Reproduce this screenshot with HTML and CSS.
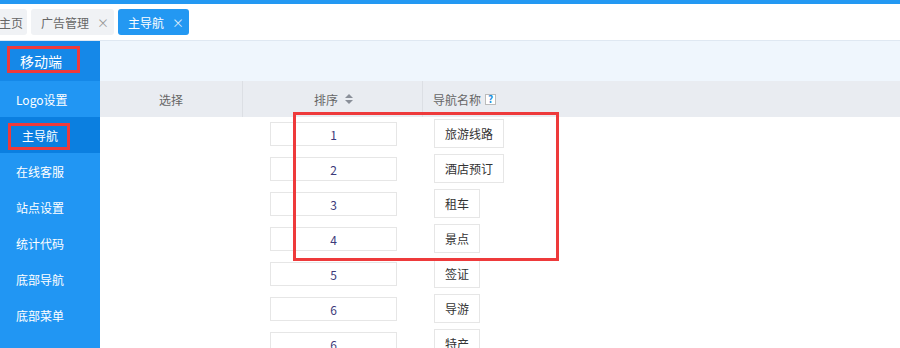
FILE: index.html
```html
<!DOCTYPE html>
<html>
<head>
<meta charset="utf-8">
<link rel="stylesheet" href="styles.css">
</head>
<body>
<div class="topline"></div>
<div class="tabbar">
  <div class="tab tab-cut">主页</div>
  <div class="tab">广告管理<span class="x">×</span></div>
  <div class="tab active">主导航<span class="x">×</span></div>
</div>
<div class="main">
  <aside class="side">
    <div class="side-head"><span class="side-title">移动端</span><span class="mark mark-head"></span></div>
    <div class="item">Logo设置</div>
    <div class="item on">主导航<span class="mark mark-item"></span></div>
    <div class="item">在线客服</div>
    <div class="item">站点设置</div>
    <div class="item">统计代码</div>
    <div class="item">底部导航</div>
    <div class="item">底部菜单</div>
  </aside>
  <section class="content">
    <div class="strip"></div>
    <div class="table">
      <div class="thead">
        <div class="c1">选择</div>
        <div class="c2">排序 <svg class="sort" width="8" height="10" viewBox="0 0 8 10"><path d="M4 0L8 4H0z M0 6H8L4 10z" fill="#8a8f99"/></svg></div>
        <div class="c3">导航名称 <span class="help">?</span></div>
      </div>
      <div class="row"><div class="c1"></div><div class="c2"><span class="inp">1</span></div><div class="c3"><span class="btn">旅游线路</span></div></div>
      <div class="row"><div class="c1"></div><div class="c2"><span class="inp">2</span></div><div class="c3"><span class="btn">酒店预订</span></div></div>
      <div class="row"><div class="c1"></div><div class="c2"><span class="inp">3</span></div><div class="c3"><span class="btn">租车</span></div></div>
      <div class="row"><div class="c1"></div><div class="c2"><span class="inp">4</span></div><div class="c3"><span class="btn">景点</span></div></div>
      <div class="row"><div class="c1"></div><div class="c2"><span class="inp">5</span></div><div class="c3"><span class="btn">签证</span></div></div>
      <div class="row"><div class="c1"></div><div class="c2"><span class="inp">6</span></div><div class="c3"><span class="btn">导游</span></div></div>
      <div class="row"><div class="c1"></div><div class="c2"><span class="inp">6</span></div><div class="c3"><span class="btn">特产</span></div></div>
      <div class="mark mark-table"></div>
    </div>
  </section>
</div>
</body>
</html>
```

FILE: styles.css
```css
* { box-sizing: border-box; }
html, body { margin: 0; padding: 0; }
body {
  width: 900px; height: 348px; overflow: hidden;
  font-family: "Microsoft YaHei", "Noto Sans CJK SC", "Noto Sans", sans-serif;
  font-size: 12px; color: #333; background: #fff;
}
.topline { height: 4px; background: #2398f2; }
.tabbar {
  height: 37px; display: flex; align-items: flex-start; gap: 4px;
  padding-top: 5px; margin-left: -20px;
  border-bottom: 1px solid #dfe8f2; background: #fff;
}
.tab {
  height: 26px; padding: 0 10px 0 10px; white-space: nowrap; flex-shrink: 0;
  background: #f0f2f5; color: #666; border-radius: 3px;
  display: flex; align-items: center; font-size: 12px;
}
.tab-cut { width: 47px; padding-left: 19px; }
.tab .x { margin-left: 8px; width: 7px; font-size: 12px; color: #999; }
.tab.active { background: #2398f2; color: #fff; }
.tab.active .x { color: #dcecfb; }
.main { display: flex; height: 307px; overflow: hidden; }
.side { width: 100px; background: #2196f3; color: #fff; flex-shrink: 0; position: relative; }
.side-head {
  height: 40px; background: #1588e8; display: flex; align-items: center;
  padding-left: 20px; font-size: 14px; position: relative;
}
.item {
  height: 36px; display: flex; align-items: center; padding-left: 16px;
  font-size: 12px; position: relative;
}
.item.on { background: #0b7fe0; padding-left: 22px; }
.mark { position: absolute; border: 3px solid #ee3a3b; }
.mark-head { left: 7px; top: 5px; width: 73px; height: 27px; }
.mark-item { left: 8px; top: 6px; width: 62px; height: 27px; }
.content { flex: 1; display: flex; flex-direction: column; }
.strip { height: 40px; flex-shrink: 0; background: #eff6fd; }
.table { position: relative; flex-shrink: 0; }
.thead {
  height: 36px; background: #e9ecf1; display: flex; color: #666;
}
.thead > div { display: flex; align-items: center; }
.thead .c1 { justify-content: center; border-right: 1px solid #dcdfe4; }
.thead .c2 { justify-content: center; border-right: 1px solid #dcdfe4; padding-left: 2px; }
.thead .c3 { padding-left: 10px; }
.c1 { width: 143px; }
.c2 { width: 180px; }
.c3 { flex: 1; }
.sort { margin-left: 7px; }
.help {
  display: inline-flex; align-items: center; justify-content: center;
  width: 11px; height: 11px; margin-left: 4px; border: 1px solid #bbb;
  background: #fff; color: #1a8fe0; font-size: 10px; font-weight: bold; line-height: 1;
}
.row { height: 35px; display: flex; }
.row .c2 { padding-left: 27px; padding-top: 5px; }
.row .c3 { padding-left: 11px; padding-top: 2px; }
.inp {
  display: flex; align-items: center; justify-content: center;
  width: 127px; height: 24px; border: 1px solid #e6e6e6; color: #3c3a7a;
}
.btn {
  display: inline-flex; align-items: center; height: 29px; padding: 0 10px;
  border: 1px solid #e6e6e6; color: #333;
}
.mark-table { left: 193px; top: 31px; width: 266px; height: 149px; }
```
